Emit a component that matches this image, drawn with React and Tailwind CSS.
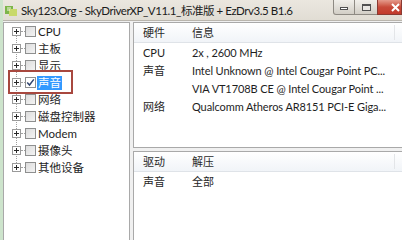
import React from "react";

const FONT = { fontFamily: 'Lato, "Noto Sans CJK SC", sans-serif' };

const items = ["CPU", "主板", "显示", "声音", "网络", "磁盘控制器", "Modem", "摄像头", "其他设备"];

function PlusBox() {
  return (
    <div className="w-[9px] h-[9px] border border-[#9a9a9a] bg-white flex items-center justify-center relative z-10">
      <svg width="7" height="7" viewBox="0 0 7 7">
        <path d="M1 3.5h5M3.5 1v5" stroke="#2a2a2a" strokeWidth="1" />
      </svg>
    </div>
  );
}

function Check({ checked }) {
  return (
    <div
      className={
        "w-[11px] h-[11px] border border-[#8e8f8f] flex items-center justify-center " +
        (checked ? "bg-white" : "bg-gradient-to-br from-[#dcdcdc] to-[#f4f4f4]")
      }
    >
      {checked && (
        <svg width="9" height="9" viewBox="0 0 9 9">
          <path d="M1.2 4.6l2.3 2.4 4.3-5.6" fill="none" stroke="#31456e" strokeWidth="1.5" />
        </svg>
      )}
    </div>
  );
}

function HeaderRow({ a, b }) {
  return (
    <div className="h-[20px] pt-[2px] flex items-center bg-gradient-to-b from-white to-[#f1f4f8] border-b border-[#dfe3e8] text-[11px] text-[#2a2a2a] relative">
      <span className="w-[58px] pl-[9px]">{a}</span>
      <span>{b}</span>
      <div className="absolute right-[7px] top-[2px] bottom-[2px] w-px bg-[#e3e5e8]" />
    </div>
  );
}

function Row({ a, b }) {
  return (
    <div className="h-[18px] pt-[2px] flex items-center text-[11px] text-[#1e1e1e] whitespace-nowrap">
      <span className="w-[58px] pl-[9px]">{a}</span>
      <span className="tracking-[-0.1px]">{b}</span>
    </div>
  );
}

export default function App() {
  return (
    <div className="w-[402px] h-[240px] overflow-hidden flex bg-[#e6e2da]" style={FONT}>
      <div className="w-[3px] h-full bg-[#cde4cc]" />
      <div className="flex-1 flex flex-col">
        {/* title bar */}
        <div className="h-[21px] flex items-start relative bg-gradient-to-b from-[#ebe7df] to-[#e1ddd4] border-b border-[#b9b5ad]">
          <div className="mt-[4px] ml-[1px] w-[14px] h-[13px] flex items-center justify-center">
            <svg width="14" height="13" viewBox="0 0 14 13">
              <rect x="1" y="2" width="8" height="8" fill="#7cb54a" />
              <rect x="5" y="5" width="8" height="7" fill="#c8d96a" />
              <path d="M3 4h4M3 6h3" stroke="#f4f8e4" strokeWidth="1" />
            </svg>
          </div>
          <div className="ml-[3px] mt-[1px] text-[11.5px] tracking-[-0.45px] text-[#1b1b1b] whitespace-nowrap leading-[20px]">
            Sky123.Org - SkyDriverXP_V11.1_标准版 + EzDrv3.5 B1.6
          </div>
          <div className="ml-auto flex h-[15px]">
            <div className="w-[22px] h-[15px] border border-[#8e8a83] border-t-0 rounded-bl-[3px] bg-gradient-to-b from-[#f1efea] to-[#d2cec6] flex items-center justify-center">
              <div className="w-[8px] h-[3px] border border-[#505050] bg-white mt-[3px]" />
            </div>
            <div className="w-[22px] h-[15px] border-b border-[#8e8a83] bg-gradient-to-b from-[#f1efea] to-[#d2cec6] flex items-center justify-center">
              <div className="w-[9px] h-[7px] border border-[#505050] border-t-2 bg-[#e8e6e2]" />
            </div>
            <div className="w-[25px] h-[15px] border border-[#8a3a32] border-t-0 bg-gradient-to-b from-[#e49a8c] via-[#c84a3a] to-[#c23a2c] flex items-center justify-end pr-[1px]">
              <svg width="9" height="9" viewBox="0 0 9 9">
                <path d="M1 1l7 7M8 1l-7 7" stroke="white" strokeWidth="2" />
              </svg>
            </div>
          </div>
        </div>
        {/* client */}
        <div className="flex-1 flex bg-[#f0f0f0] pt-[1px]">
          {/* tree */}
          <div className="w-[127px] bg-white border border-[#a9a9a9] border-b-0 relative">
            <div className="absolute left-[12px] top-[8px] h-[136px] border-l border-dotted border-[#a0a0a0]" />
            {items.map((t, i) => (
              <div key={t} className="h-[17px] flex items-center pl-[8px]">
                <PlusBox />
                <div className="w-[4px] border-t border-dotted border-[#a0a0a0]" />
                <Check checked={i === 3} />
                <span
                  className={
                    "ml-[1px] text-[11.5px] leading-[14px] px-[1px] " +
                    (i === 3 ? "bg-[#3399ff] text-white" : "text-[#1e1e1e]")
                  }
                >
                  {t}
                </span>
              </div>
            ))}
            <div className="absolute left-[4px] top-[47px] w-[65px] h-[24px] border-2 border-[#a8483f]" />
          </div>
          {/* right */}
          <div className="flex-1 flex flex-col ml-[3px]">
            <div className="h-[126px] bg-white border border-[#a9a9a9] border-r-0">
              <HeaderRow a="硬件" b="信息" />
              <Row a="CPU" b="2x , 2600 MHz" />
              <Row a="声音" b="Intel Unknown @ Intel Cougar Point PC..." />
              <Row a="" b="VIA VT1708B CE @ Intel Cougar Point ..." />
              <Row a="网络" b="Qualcomm Atheros AR8151 PCI-E Giga..." />
            </div>
            <div className="h-[3px]" />
            <div className="flex-1 bg-white border border-[#a9a9a9] border-r-0 border-b-0">
              <HeaderRow a="驱动" b="解压" />
              <Row a="声音" b="全部" />
            </div>
          </div>
        </div>
      </div>
    </div>
  );
}
